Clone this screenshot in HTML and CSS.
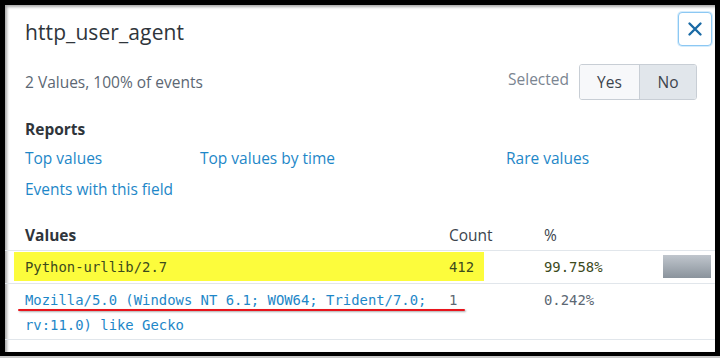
FILE: index.html
```html
<!DOCTYPE html>
<html lang="en">
<head>
  <meta charset="UTF-8">
  <title>http_user_agent</title>
  <link rel="stylesheet" href="styles.css">
</head>
<body>

<div class="modal">
  <div class="modal-header">
    <h2>http_user_agent</h2>
    <button class="close" aria-label="Close">
      <svg width="16" height="16" viewBox="0 0 16 16"><path d="M2.5 2.5 L13.5 13.5 M13.5 2.5 L2.5 13.5" stroke="#1a6aa5" stroke-width="2.4" stroke-linecap="round"/></svg>
    </button>
  </div>

  <div class="summary">
    <span>2 Values, 100% of events</span>
    <div class="selected">
      <span class="selected-label">Selected</span>
      <div class="toggle">
        <button>Yes</button>
        <button class="active">No</button>
      </div>
    </div>
  </div>

  <h3>Reports</h3>
  <div class="reports">
    <a href="#">Top values</a>
    <a href="#">Top values by time</a>
    <a href="#">Rare values</a>
    <a href="#">Events with this field</a>
  </div>

  <div class="values">
    <div class="row head">
      <span class="strong">Values</span>
      <span>Count</span>
      <span>%</span>
      <span></span>
    </div>
    <div class="row hl">
      <span class="mono">Python-urllib/2.7</span>
      <span class="mono">412</span>
      <span class="mono">99.758%</span>
      <span class="bar"></span>
    </div>
    <div class="row marked">
      <a href="#" class="mono">Mozilla/5.0 (Windows NT 6.1; WOW64; Trident/7.0; rv:11.0) like Gecko</a>
      <span class="mono">1</span>
      <span class="mono">0.242%</span>
      <span></span>
    </div>
  </div>
</div>

</body>
</html>
```

FILE: styles.css
```css
:root {
  --text: #3c444d;
  --muted: #5c6773;
  --link: #1e87c8;
  --line: #e1e6eb;
}

html, body {
  height: 100%;
}

body {
  margin: 0;
  background: #000;
  font-family: 'Open Sans', Lato, sans-serif;
  color: var(--text);
  padding: 5px 5px 6px 5px;
  box-sizing: border-box;
  position: relative;
}

body::after {
  content: '';
  position: absolute;
  left: 0;
  right: 0;
  bottom: 0;
  height: 2px;
  background: #c9c9c9;
}

.modal {
  background: #fff;
  height: 347px;
  box-shadow: inset 2px 2px 3px rgba(0,0,0,0.35);
  overflow: hidden;
}

.modal-header {
  display: flex;
  justify-content: space-between;
  align-items: flex-start;
  padding: 7px 3px 0 20px;
  height: 58px;
  box-sizing: border-box;
}

h2 {
  margin: 6px 0 0;
  font-size: 21px;
  font-weight: 400;
  color: #2f353b;
  letter-spacing: 0.1px;
}

.close {
  width: 34px;
  height: 34px;
  background: #fff;
  border: 1px solid #8cc8f3;
  border-radius: 4px;
  box-shadow: 0 0 0 1px #d5ecfc;
  display: flex;
  align-items: center;
  justify-content: center;
  padding: 0;
}

.summary {
  display: flex;
  justify-content: space-between;
  align-items: center;
  padding: 0 18px 0 20px;
  font-size: 15.5px;
  color: var(--muted);
  height: 37px;
}

.selected {
  display: flex;
  align-items: center;
  gap: 10px;
}

.selected-label {
  color: #7b8591;
  font-size: 15.5px;
  margin-top: -6px;
}

.toggle {
  display: flex;
  border: 1px solid #c8ced5;
  border-radius: 3px;
  overflow: hidden;
}

.toggle button {
  font: inherit;
  font-size: 15.5px;
  color: var(--text);
  background: #f7f8fa;
  border: none;
  height: 34px;
  width: 59px;
  padding: 0;
}

.toggle button.active {
  background: #e1e6eb;
  border-left: 1px solid #c8ced5;
  width: 57px;
}

h3 {
  margin: 18px 0 0 20px;
  font-size: 15.5px;
  font-weight: 700;
  color: #2f353b;
}

.reports {
  display: grid;
  grid-template-columns: 175px 306px 1fr;
  row-gap: 9px;
  padding: 7px 0 0 20px;
  font-size: 15.5px;
}

.reports a {
  color: var(--link);
  text-decoration: none;
}

.values {
  margin-top: 24px;
}

.row {
  display: grid;
  grid-template-columns: 424px 95px 119px 48px;
  padding-left: 20px;
  border-bottom: 1px solid var(--line);
  position: relative;
  align-items: start;
}

.head {
  font-size: 15.5px;
  height: 26px;
}

.strong {
  font-weight: 700;
  color: #2f353b;
}

.mono {
  font-family: 'DejaVu Sans Mono', monospace;
  font-size: 13.9px;
  line-height: 25px;
}

.row.hl {
  height: 33px;
  padding-top: 4px;
  box-sizing: border-box;
}

.row.hl::before {
  content: '';
  position: absolute;
  left: 9px;
  top: 1px;
  width: 470px;
  height: 29px;
  background: #fcfc3c;
}

.row.hl span {
  position: relative;
  color: #3c4a1c;
}

.bar {
  height: 23px;
  margin-top: 0;
  background: linear-gradient(#c0c6cd, #8a939c);
}

.row.marked {
  height: 56px;
  padding-top: 4px;
  box-sizing: border-box;
  color: var(--muted);
}

.row.marked a {
  color: var(--link);
  text-decoration: none;
  padding-right: 4px;
}

.row.marked::after {
  content: '';
  position: absolute;
  left: 13px;
  top: 25px;
  width: 447px;
  height: 2px;
  background: #e8141c;
  box-shadow: 1px 1px 2px rgba(0,0,0,0.35);
  border-radius: 1px;
}
```
